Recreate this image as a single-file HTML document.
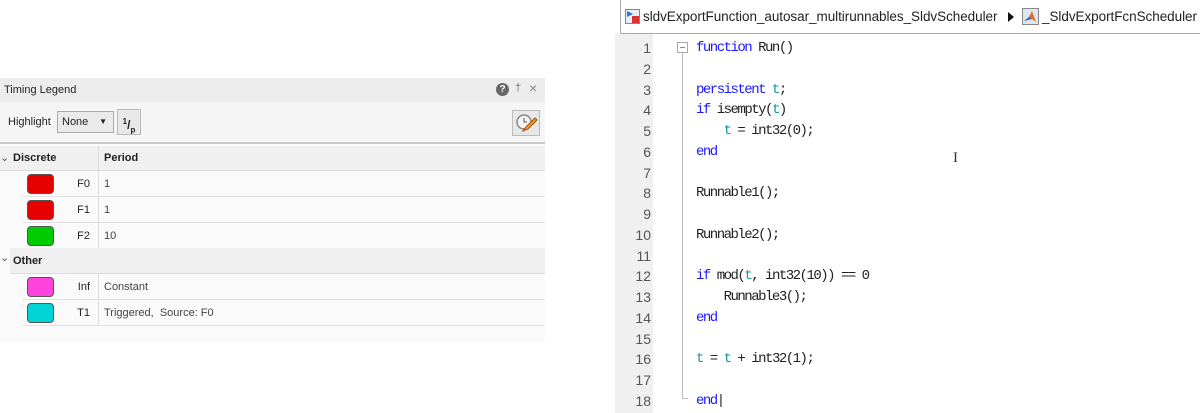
<!DOCTYPE html>
<html><head><meta charset="utf-8"><style>
*{margin:0;padding:0;box-sizing:border-box}
body{width:1200px;height:413px;background:#fff;position:relative;overflow:hidden;font-family:"Liberation Sans",sans-serif;color:#222}
.a{position:absolute}
.lp{left:0;top:78px;width:545px;height:264px;background:#fafafa}
.title{left:0;top:78px;width:545px;height:24px;background:#ececec;font-size:11px;line-height:24px;padding-left:4px}
.tb{left:0;top:102px;width:545px;height:42px;background:#f5f5f5;border-bottom:2px solid #c8c8c8}
.th{left:0;top:146px;width:545px;height:25px;background:#f0f0f0;border-bottom:1px solid #ddd;font-size:11px;font-weight:bold;line-height:25px}
.row{left:23px;width:522px;height:26px;border-bottom:1px solid #e2e2e2;background:#fafafa;font-size:11px;line-height:26px}
.sw{position:absolute;left:4px;top:3px;width:27px;height:20px;border:1px solid #555;border-radius:4px}
.nm{position:absolute;left:20px;width:47px;text-align:right}
.pd{position:absolute;left:81px;color:#444}
.vl{position:absolute;left:75px;top:0;bottom:0;border-left:1px solid #ddd}
.grp{left:10px;width:535px;height:26px;background:#efefef;border-bottom:1px solid #ddd;font-size:11px;font-weight:bold;line-height:26px}
.ln{left:615px;width:38px;background:#f0f0f0;top:34px;height:379px}
.num{position:absolute;left:615px;width:36px;text-align:right;font-family:"Liberation Sans",sans-serif;font-size:14px;color:#555}
.cl{position:absolute;left:696px;white-space:pre;font-family:"Liberation Mono",monospace;font-size:14px;letter-spacing:-1.5px}
.k{color:#1a1aff}.v{color:#119999}
</style></head><body>
<div class="a lp"></div>
<div class="a title">Timing Legend</div>
<div class="a" style="left:496px;top:83px;width:13px;height:13px;border-radius:50%;background:#666;color:#fff;font-size:10px;font-weight:bold;text-align:center;line-height:13px">?</div>
<div class="a" style="left:515px;top:82px;font-size:11px;color:#777">&#8224;</div>
<div class="a" style="left:529px;top:80px;font-size:14px;color:#888">×</div>
<div class="a tb"></div>
<div class="a" style="left:8px;top:116px;font-size:11px">Highlight</div>
<div class="a" style="left:57px;top:111px;width:57px;height:22px;border:1px solid #aaa;background:#eaeaea;font-size:11px;line-height:20px;padding-left:4px">None <span style="position:absolute;right:6px;font-size:8px">▼</span></div>
<div class="a" style="left:117px;top:109px;width:24px;height:26px;border:1px solid #bbb;background:#e8e8e8;font-size:12px;font-weight:bold;text-align:center;line-height:24px"><sup style="font-size:8px">1</sup>/<sub style="font-size:8px">p</sub></div>
<div class="a" style="left:512px;top:110px;width:28px;height:26px;border:1px solid #bbb;background:#e8e8e8"><svg width="26" height="24"><circle cx="11" cy="11" r="7" fill="#f4f4f4" stroke="#888" stroke-width="1.5"/><path d="M11 7v4h3" stroke="#555" fill="none"/><path d="M10 20l3-4 9-9 2 2-9 9z" fill="#f0a030" stroke="#a05010"/><path d="M10 20l1-3 2 2z" fill="#e33"/></svg></div>
<div class="a th"><span style="position:absolute;left:0;font-weight:normal;color:#555">&#8964;</span><span style="position:absolute;left:13px">Discrete</span><span style="position:absolute;left:104px">Period</span><span style="position:absolute;left:98px;top:0;bottom:0;border-left:1px solid #ddd"></span></div>
<div class="a row" style="top:171px"><div class="sw" style="background:#e60000"></div><div class="nm">F0</div><div class="vl"></div><div class="pd">1</div></div>
<div class="a row" style="top:197px"><div class="sw" style="background:#e60000"></div><div class="nm">F1</div><div class="vl"></div><div class="pd">1</div></div>
<div class="a row" style="top:223px"><div class="sw" style="background:#00cc00"></div><div class="nm">F2</div><div class="vl"></div><div class="pd">10</div></div>
<div class="a grp" style="top:248px"><span style="position:absolute;left:3px">Other</span></div>
<div class="a" style="left:0;top:251px;font-size:11px;color:#555">&#8964;</div>
<div class="a row" style="top:274px"><div class="sw" style="background:#ff44dd"></div><div class="nm">Inf</div><div class="vl"></div><div class="pd">Constant</div></div>
<div class="a row" style="top:300px"><div class="sw" style="background:#00d4d4"></div><div class="nm">T1</div><div class="vl"></div><div class="pd">Triggered,&nbsp; Source: F0</div></div>

<div class="a" style="left:620px;top:0;width:580px;height:34px;border:1px solid #aaa;border-top:none;border-right:none;background:#fff"></div>
<div class="a" style="left:625px;top:9px;width:15px;height:15px;border:1px solid #888;background:#e8eef8"><div style="position:absolute;right:0;bottom:0;width:7px;height:7px;background:#d33"></div><div style="position:absolute;left:1px;top:1px;width:0;height:0;border-left:6px solid #2a7ad0;border-top:3px solid transparent;border-bottom:3px solid transparent"></div></div>
<div class="a" style="left:643px;top:9px;font-size:13.5px;letter-spacing:-0.05px;color:#222;white-space:nowrap">sldvExportFunction_autosar_multirunnables_SldvScheduler</div>
<div class="a" style="left:1008px;top:12px;width:0;height:0;border-left:6px solid #111;border-top:5px solid transparent;border-bottom:5px solid transparent"></div>
<div class="a" style="left:1022px;top:8px;width:17px;height:17px;border:1px solid #888;background:#dde6f2"><svg width="15" height="15"><path d="M1 12l5-4 3-6 4 11-4-3z" fill="#e07020"/><path d="M1 12l5-4 3 2z" fill="#3070c0"/></svg></div>
<div class="a" style="left:1042px;top:9px;font-size:13.5px;letter-spacing:-0.05px;color:#222">_SldvExportFcnScheduler</div>

<div class="a ln"></div>
<div class="a" style="left:677px;top:42px;width:11px;height:11px;border:1px solid #aaa;background:#fff"><div style="position:absolute;left:2px;top:4px;width:5px;border-top:1px solid #888"></div></div>
<div class="a" style="left:682px;top:53px;height:345px;border-left:1px solid #bbb"></div>
<div class="a" style="left:682px;top:398px;width:6px;border-top:1px solid #bbb"></div>
<div class="num" style="top:40px">1</div><div class="num" style="top:61px">2</div><div class="num" style="top:82px">3</div><div class="num" style="top:102px">4</div><div class="num" style="top:123px">5</div><div class="num" style="top:144px">6</div><div class="num" style="top:165px">7</div><div class="num" style="top:185px">8</div><div class="num" style="top:206px">9</div><div class="num" style="top:227px">10</div><div class="num" style="top:248px">11</div><div class="num" style="top:268px">12</div><div class="num" style="top:289px">13</div><div class="num" style="top:310px">14</div><div class="num" style="top:331px">15</div><div class="num" style="top:351px">16</div><div class="num" style="top:372px">17</div><div class="num" style="top:393px">18</div>
<div class="cl" style="top:40px"><span class="k">function</span> Run()</div>
<div class="cl" style="top:82px"><span class="k">persistent</span> <span class="v">t</span>;</div>
<div class="cl" style="top:102px"><span class="k">if</span> isempty(<span class="v">t</span>)</div>
<div class="cl" style="top:123px">    <span class="v">t</span> = int32(0);</div>
<div class="cl" style="top:144px"><span class="k">end</span></div>
<div class="cl" style="top:185px">Runnable1();</div>
<div class="cl" style="top:227px">Runnable2();</div>
<div class="cl" style="top:268px"><span class="k">if</span> mod(<span class="v">t</span>, int32(10)) == 0</div>
<div class="cl" style="top:289px">    Runnable3();</div>
<div class="cl" style="top:310px"><span class="k">end</span></div>
<div class="cl" style="top:351px"><span class="v">t</span> = <span class="v">t</span> + int32(1);</div>
<div class="cl" style="top:393px"><span class="k">end</span>|</div>
<div class="a" style="left:953px;top:150px;font-size:15px;color:#333;font-family:'Liberation Serif',serif">I</div>
</body></html>
